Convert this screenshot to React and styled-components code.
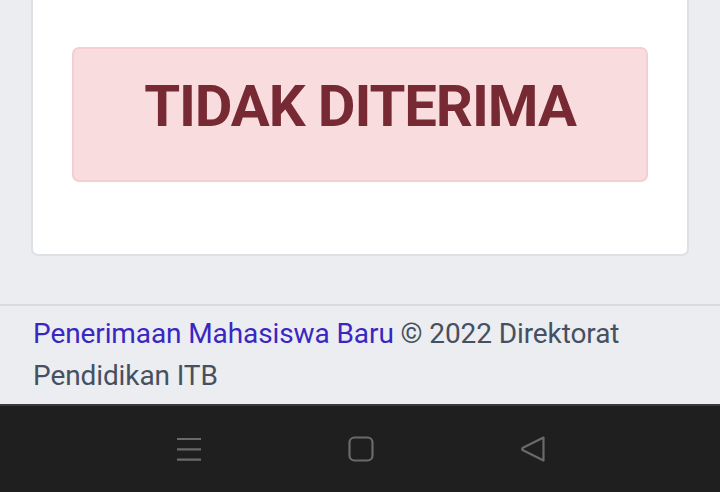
import React from "react";
import styled, { createGlobalStyle } from "styled-components";

const Global = createGlobalStyle`
  html, body { margin: 0; padding: 0; background: #ebedf0; }
  body { font-family: Roboto, "Liberation Sans", sans-serif; overflow: hidden; }
  #root { height: 492px; }
`;

const Screen = styled.div`
  width: 720px;
  height: 492px;
  display: flex;
  flex-direction: column;
  overflow: hidden;
  background: #ebedf0;
`;

const Main = styled.main`
  padding: 0 31px 48px;
`;

const Card = styled.section`
  margin-top: -40px;
  background: #fff;
  border: 2px solid #dde0e4;
  border-radius: 7px;
  padding: 85px 39px 72px;
`;

const Alert = styled.div`
  background: #f9dcdd;
  border: 2px solid #f4cfd1;
  border-radius: 7px;
  padding: 23px 20px 40px;
  text-align: center;
`;

const Status = styled.h1`
  margin: 0;
  font-family: Roboto, "Liberation Sans", sans-serif;
  font-weight: 700;
  font-size: 58px;
  line-height: 68px;
  letter-spacing: -1.1px;
  color: #772a34;
`;

const Footer = styled.footer`
  flex: 1;
  border-top: 2px solid #d9dbde;
  padding: 7px 33px 0;
  font-size: 28px;
  line-height: 42px;
  letter-spacing: -0.1px;
  color: #465061;
`;

const FooterLink = styled.a`
  color: #3a27c2;
  text-decoration: none;
`;

const NavBar = styled.nav`
  height: 86px;
  flex: none;
  background: #1f1f1f;
  border-top: 2px solid #3a3a3a;
  display: flex;
  justify-content: center;
  align-items: center;
  gap: 146px;
  padding-left: 2px;
`;

const NavButton = styled.button`
  border: none;
  background: transparent;
  padding: 0;
  width: 26px;
  height: 30px;
  display: flex;
  justify-content: center;
  align-items: center;
`;

const Icon = styled.svg`
  flex: none;
  stroke: #6a6a6a;
  fill: none;
  stroke-width: 2.2;
`;

export default function App() {
  return (
    <>
      <Global />
      <Screen>
        <Main>
          <Card>
            <Alert>
              <Status>TIDAK DITERIMA</Status>
            </Alert>
          </Card>
        </Main>
        <Footer>
          <FooterLink href="#">Penerimaan Mahasiswa Baru</FooterLink> © 2022 Direktorat
          Pendidikan ITB
        </Footer>
        <NavBar>
          <NavButton aria-label="Menu">
            <Icon width="26" height="26" viewBox="0 0 26 26">
              <path d="M1 3h24M1 13.3h24M1 23.6h24" />
            </Icon>
          </NavButton>
          <NavButton aria-label="Home">
            <Icon width="26" height="26" viewBox="0 0 26 26">
              <rect x="1.5" y="1.5" width="23" height="23" rx="5" />
            </Icon>
          </NavButton>
          <NavButton aria-label="Back">
            <Icon width="28" height="28" viewBox="0 0 28 28" strokeLinejoin="round">
              <path d="M24.5 2.5 L3.5 13 Q2.8 14 3.5 15 L24.5 25.5 Z" />
            </Icon>
          </NavButton>
        </NavBar>
      </Screen>
    </>
  );
}
